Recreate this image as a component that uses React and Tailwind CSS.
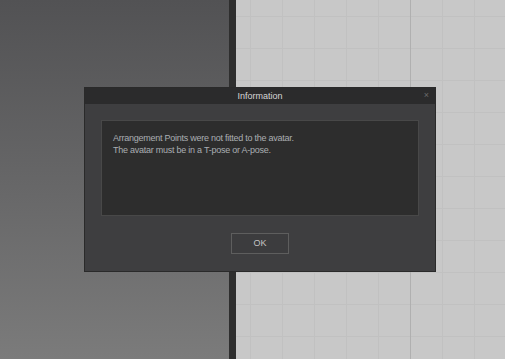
import React from 'react'

const font = { fontFamily: '"Liberation Sans", Arial, sans-serif' }

const InfoDialog = () => {
  return (
    <div
      className="absolute left-[84px] top-[87px] w-[352px] h-[185px] flex flex-col bg-[#3e3e40] border border-[#2a2a2a]"
      style={font}
    >
      {/* title bar */}
      <div className="relative h-[16px] shrink-0 flex items-center justify-center bg-[#2b2b2c]">
        <span className="text-[9px] leading-none text-[#d6d6d6]">Information</span>
        <span className="absolute right-[6px] top-[3px] text-[9px] leading-none text-[#6a6a6a]">×</span>
      </div>

      <div className="flex-1 flex flex-col px-[16px] pt-[16px] pb-[17px]">
        <div className="h-[96px] bg-[#2d2d2d] border border-[#484848] px-[11px] pt-[11px] text-[9px] leading-[12px] tracking-[-0.25px] text-[#aaadb2]">
          <p>Arrangement Points were not fitted to the avatar.</p>
          <p>The avatar must be in a T-pose or A-pose.</p>
        </div>
        <div className="flex-1 flex items-end justify-center">
          <button className="w-[58px] h-[21px] border border-[#5e5e5e] bg-[#3c3c3e] text-[9px] text-[#c4c4c4]">
            OK
          </button>
        </div>
      </div>
    </div>
  )
}

export default function App() {
  return (
    <div className="relative w-[505px] h-[359px] flex overflow-hidden">
      <div className="w-[229px] h-full bg-gradient-to-b from-[#525254] to-[#7b7b7b]" />
      <div className="w-[7px] h-full bg-[#2e2e2e]" />
      <div className="flex-1 h-full flex bg-[#c8c8c8] bg-[linear-gradient(to_right,#c1c1c1_1px,transparent_1px),linear-gradient(to_bottom,#c1c1c1_1px,transparent_1px)] bg-size-[32px_32px] bg-position-[14px_16px]">
        <div className="w-[174px] shrink-0" />
        <div className="w-px h-full bg-[#b0b0b0]" />
      </div>
      <InfoDialog />
    </div>
  )
}
